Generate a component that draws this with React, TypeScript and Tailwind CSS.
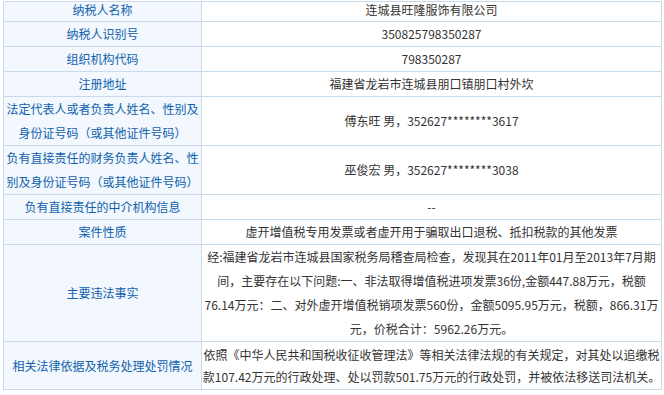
import React from 'react';

interface Row {
  h: string;
  lead: string;
  label: string[];
  value: string[];
  align?: string;
}

const rows: Row[] = [
  { h: 'h-[19px]', lead: 'leading-[15px]', align: 'justify-start', label: ['纳税人名称'], value: ['连城县旺隆服饰有限公司'] },
  { h: 'h-[24px]', lead: 'leading-[24px]', label: ['纳税人识别号'], value: ['350825798350287'] },
  { h: 'h-[24px]', lead: 'leading-[24px]', label: ['组织机构代码'], value: ['798350287'] },
  { h: 'h-[24px]', lead: 'leading-[24px]', label: ['注册地址'], value: ['福建省龙岩市连城县朋口镇朋口村外坎'] },
  {
    h: 'h-[48px]',
    lead: 'leading-[24px]',
    label: ['法定代表人或者负责人姓名、性别及', '身份证号码（或其他证件号码）'],
    value: ['傅东旺 男，352627********3617'],
  },
  {
    h: 'h-[48px]',
    lead: 'leading-[24px]',
    label: ['负有直接责任的财务负责人姓名、性', '别及身份证号码（或其他证件号码）'],
    value: ['巫俊宏 男，352627********3038'],
  },
  { h: 'h-[24px]', lead: 'leading-[24px]', label: ['负有直接责任的中介机构信息'], value: ['--'] },
  { h: 'h-[24px]', lead: 'leading-[24px]', label: ['案件性质'], value: ['虚开增值税专用发票或者虚开用于骗取出口退税、抵扣税款的其他发票'] },
  {
    h: 'h-[96px]',
    lead: 'leading-[24px]',
    label: ['主要违法事实'],
    value: [
      '经:福建省龙岩市连城县国家税务局稽查局检查，发现其在2011年01月至2013年7月期',
      '间，主要存在以下问题:一、非法取得增值税进项发票36份,金额447.88万元，税额',
      '76.14万元：二、对外虚开增值税销项发票560份，金额5095.95万元，税额，866.31万',
      '元，价税合计：5962.26万元。',
    ],
  },
  {
    h: 'h-[47px]',
    lead: 'leading-[22px]',
    label: ['相关法律依据及税务处理处罚情况'],
    value: [
      '依照《中华人民共和国税收征收管理法》等相关法律法规的有关规定，对其处以追缴税',
      '款107.42万元的行政处理、处以罚款501.75万元的行政处罚，并被依法移送司法机关。',
    ],
  },
];

export default function App() {
  return (
    <div className="w-[664px] h-[395px] bg-white pt-[1px] pl-[3px] text-[12px] font-['Noto_Sans_CJK_SC','Noto_Sans',sans-serif]">
      <div className="w-[659px] grid grid-cols-[197px_459px] gap-px bg-[#c9daec] border border-[#c9daec]">
        {rows.map((r, i) => (
          <React.Fragment key={i}>
            <div
              className={`${r.h} ${r.align ?? 'justify-center'} flex flex-col items-center bg-[#f2f8fd] text-[#1060ad] whitespace-nowrap overflow-hidden`}
            >
              {r.label.map((l, j) => (
                <div key={j} className={r.lead}>
                  {l}
                </div>
              ))}
            </div>
            <div
              className={`${r.h} ${r.align ?? 'justify-center'} flex flex-col items-center bg-white text-[#333333] whitespace-pre overflow-hidden`}
            >
              {r.value.map((l, j) => (
                <div key={j} className={r.lead}>
                  {l}
                </div>
              ))}
            </div>
          </React.Fragment>
        ))}
      </div>
    </div>
  );
}
